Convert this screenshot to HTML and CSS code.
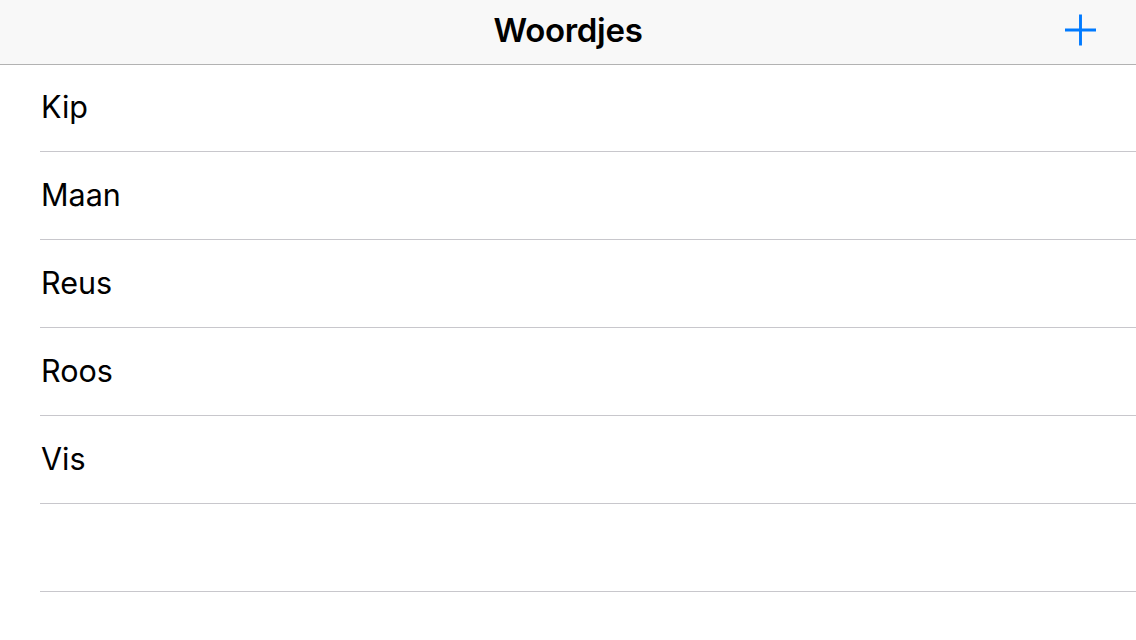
FILE: index.html
```html
<!DOCTYPE html>
<html lang="nl">
<head>
<meta charset="utf-8">
<title>Woordjes</title>
<link rel="stylesheet" href="styles.css">
</head>
<body>
<header class="navbar">
  <h1 class="title">Woordjes</h1>
  <button class="add" aria-label="Toevoegen">
    <svg width="32" height="32" viewBox="0 0 32 32"><path d="M16 0V32M0 16H32" stroke="#007aff" stroke-width="3" fill="none"/></svg>
  </button>
</header>
<ul class="list">
  <li class="row">Kip</li>
  <li class="row">Maan</li>
  <li class="row">Reus</li>
  <li class="row">Roos</li>
  <li class="row">Vis</li>
  <li class="row"></li>
</ul>
</body>
</html>
```
FILE: styles.css
```css
html, body {
  margin: 0;
  padding: 0;
  background: #ffffff;
  font-family: Inter, "Noto Sans", "Liberation Sans", sans-serif;
  color: #000;
}
.navbar {
  height: 64px;
  background: #f8f8f8;
  border-bottom: 1px solid #b2b2b2;
  display: flex;
  align-items: center;
  justify-content: center;
  position: relative;
}
.title {
  margin: 0;
  font-size: 33px;
  font-weight: 600;
  letter-spacing: -0.3px;
  padding-bottom: 4px;
}
.add {
  position: absolute;
  right: 40px;
  top: 14px;
  width: 31px;
  height: 31px;
  padding: 0;
  border: 0;
  background: none;
  display: flex;
}
.list {
  list-style: none;
  margin: -1px 0 0 0;
  padding: 0 0 0 40px;
}
.row {
  height: 85px;
  padding-bottom: 2px;
  border-bottom: 1px solid #c8c7cc;
  display: flex;
  align-items: center;
  font-size: 30.5px;
  padding-left: 1px;
}
```
